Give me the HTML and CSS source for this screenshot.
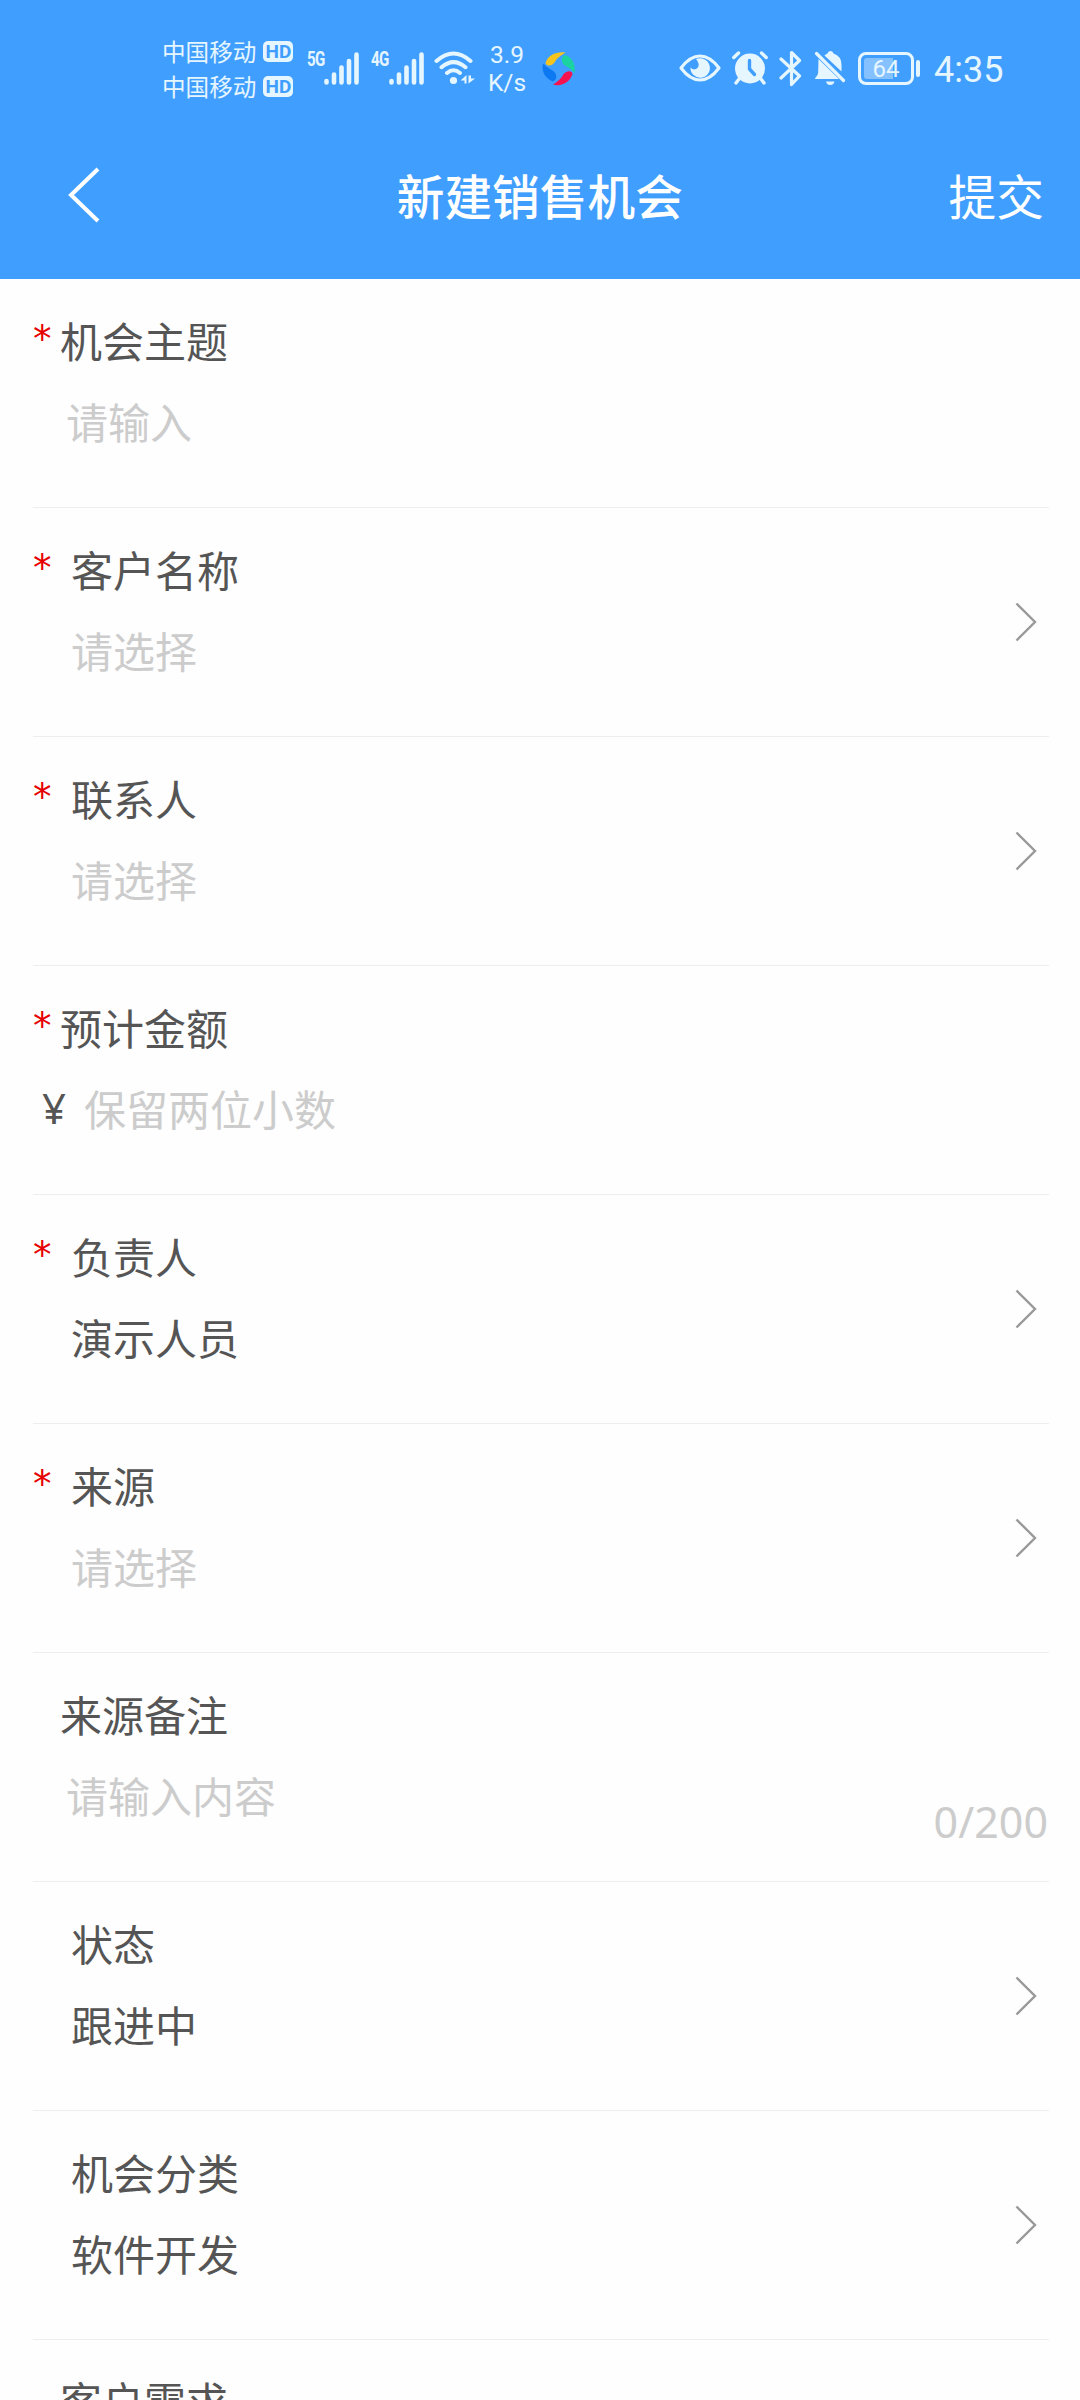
FILE: index.html
```html
<!DOCTYPE html>
<html lang="zh-CN">
<head>
    <meta charset="UTF-8">
    <meta name="viewport" content="width=device-width, initial-scale=1.0">
    <title>新建销售机会</title>
    <link rel="stylesheet" href="styles.css">
</head>
<body>
    <header class="header">
        <div class="status-bar">
            <div class="carriers">
                <div class="carrier">中国移动<span class="hd">HD</span></div>
                <div class="carrier">中国移动<span class="hd">HD</span></div>
            </div>
            <span class="net">5G</span>
            <svg class="signal" width="35" height="33" viewBox="0 0 35 33" stroke="#e6f6ff" stroke-width="4.6" stroke-linecap="round">
                <path d="M2.5 29v1.5M10 22.5v8M17.5 15.5v15M25 9v21.5M32.5 2.5v28"/>
            </svg>
            <span class="net net-4g">4G</span>
            <svg class="signal" width="35" height="33" viewBox="0 0 35 33" stroke="#e6f6ff" stroke-width="4.6" stroke-linecap="round">
                <path d="M2.5 29v1.5M10 22.5v8M17.5 15.5v15M25 9v21.5M32.5 2.5v28"/>
            </svg>
            <svg class="wifi" width="41" height="34" viewBox="0 0 41 34" fill="none" stroke="#e6f6ff" stroke-width="4" stroke-linecap="round">
                <path d="M2.5 10Q19.500 -5 36.500 10M7.500 16.200Q19.500 6 31.500 16.200M13 22Q19.500 16.500 26 22"/>
                <circle cx="19.500" cy="29.500" r="3.600" fill="#e6f6ff" stroke="none"/>
                <path d="M26.500 29.500L32.500 24V32.500H30.500V29.500zM34.500 24.500V32.500L41 27.500H37V24.500z" fill="#e6f6ff" stroke="none"/>
            </svg>
            <div class="speed">
                <div>3.9</div>
                <div>K/s</div>
            </div>
            <svg class="swirl" width="34" height="35" viewBox="0 0 34 35">
                <path d="M3.500 12C6 4 14 .500 23.500 1.500C18 5 15 7 12.500 11.500C10 15.500 4.500 15.500 3.500 12z" fill="#f6c51d"/>
                <path d="M23 4C30 6 34 13 32.500 22C29 18 26.500 16.500 23 14.500C18.500 11.500 19 5.500 23 4z" fill="#1bd3a0"/>
                <path d="M30.500 23C28 31 20 36 11 33.500C16 30.500 18.500 28 21 24C24 19.500 30 19 30.500 23z" fill="#f5124f"/>
                <path d="M11 30.500C4 28 -1 21 1 12.500C4.500 16 7 17.500 10.500 19.500C15.500 22.500 15.500 28.500 11 30.500z" fill="#0c79f2"/>
            </svg>
            <svg class="eye" width="42" height="28" viewBox="0 0 42 28">
                <path d="M2 14Q11 2 21 2T40 14Q31 26 21 26T2 14z" fill="none" stroke="#e6f6ff" stroke-width="3.200" stroke-linejoin="round"/>
                <path d="M19 4.500A9.700 9.700 0 1 1 11.500 13.500Q15 17 18.500 14Q21.500 10 17 5z" fill="#e6f6ff"/>
            </svg>
            <svg class="alarm" width="36" height="34" viewBox="0 0 36 34">
                <circle cx="18" cy="17.500" r="15" fill="#e6f6ff"/>
                <path d="M1.800 6.500L6.500 2M29.500 2L34.200 6.500M7 28L4 32M29 28L32 32" stroke="#e6f6ff" stroke-width="3.400" stroke-linecap="round"/>
                <path d="M17.500 9.500V18L22.500 23.500" fill="none" stroke="#409eff" stroke-width="3.400" stroke-linecap="round" stroke-linejoin="round"/>
            </svg>
            <svg class="bluetooth" width="23" height="37" viewBox="0 0 23 37">
                <path d="M2 9L20.500 26L12.500 34.500V2.500L20.500 10.500L2 28" fill="none" stroke="#e6f6ff" stroke-width="3.200" stroke-linecap="round" stroke-linejoin="round"/>
            </svg>
            <svg class="bell" width="32" height="34" viewBox="0 0 32 34" fill="#e6f6ff">
                <path d="M4.500 8L25 28H1C1 26 4.200 25 4.200 21zM10.500 4.500Q12 3 13.500 2.500Q14 0 16.500 0T19.500 2.500Q27.500 5 27.500 14V20.500z"/>
                <path d="M12 30.500H20.500Q19.500 34 16.200 34T12 30.500z"/>
                <path d="M2.500 2.500L29.500 29.500" stroke="#e6f6ff" stroke-width="3.200" stroke-linecap="round"/>
            </svg>
            <div class="battery">
                <div class="battery-level">64</div>
            </div>
            <div class="battery-cap"></div>
            <span class="clock">4:35</span>
        </div>
        <div class="nav-bar">
            <svg class="back" width="34" height="56" viewBox="0 0 34 56">
                <path d="M32 2L5 28L32 54" fill="none" stroke="#fff" stroke-width="4"/>
            </svg>
            <h1 class="title">新建销售机会</h1>
            <span class="submit">提交</span>
        </div>
    </header>

    <main class="form">
        <div class="field">
            <div class="label"><span class="star">*</span>机会主题</div>
            <div class="value placeholder">请输入</div>
        </div>
        <div class="field select">
            <div class="label"><span class="star">*</span>客户名称</div>
            <div class="value placeholder">请选择</div>
            <svg class="arrow" width="22" height="40" viewBox="0 0 22 40"><path d="M1.500 1.500L20 20L1.500 38.500"/></svg>
        </div>
        <div class="field select">
            <div class="label"><span class="star">*</span>联系人</div>
            <div class="value placeholder">请选择</div>
            <svg class="arrow" width="22" height="40" viewBox="0 0 22 40"><path d="M1.500 1.500L20 20L1.500 38.500"/></svg>
        </div>
        <div class="field money">
            <div class="label"><span class="star">*</span>预计金额</div>
            <div class="value placeholder"><span class="yen">¥</span>保留两位小数</div>
        </div>
        <div class="field select">
            <div class="label"><span class="star">*</span>负责人</div>
            <div class="value">演示人员</div>
            <svg class="arrow" width="22" height="40" viewBox="0 0 22 40"><path d="M1.500 1.500L20 20L1.500 38.500"/></svg>
        </div>
        <div class="field select">
            <div class="label"><span class="star">*</span>来源</div>
            <div class="value placeholder">请选择</div>
            <svg class="arrow" width="22" height="40" viewBox="0 0 22 40"><path d="M1.500 1.500L20 20L1.500 38.500"/></svg>
        </div>
        <div class="field">
            <div class="label"><span class="star"></span>来源备注</div>
            <div class="value placeholder">请输入内容</div>
            <span class="count">0/200</span>
        </div>
        <div class="field select">
            <div class="label"><span class="star"></span>状态</div>
            <div class="value">跟进中</div>
            <svg class="arrow" width="22" height="40" viewBox="0 0 22 40"><path d="M1.500 1.500L20 20L1.500 38.500"/></svg>
        </div>
        <div class="field select">
            <div class="label"><span class="star"></span>机会分类</div>
            <div class="value">软件开发</div>
            <svg class="arrow" width="22" height="40" viewBox="0 0 22 40"><path d="M1.500 1.500L20 20L1.500 38.500"/></svg>
        </div>
        <div class="field last">
            <div class="label"><span class="star"></span>客户需求</div>
        </div>
    </main>
</body>
</html>
```
FILE: styles.css
```css
body {
    font-family: "Noto Sans CJK SC", sans-serif;
    background-color: #fefefe;
    margin: 0;
    height: 2400px;
    color: #555;
    overflow: hidden;
}

svg {
    display: block;
    flex-shrink: 0;
}

.header {
    background-color: #409eff;
    height: 279px;
    color: white;
}

/* status bar */
.status-bar {
    display: flex;
    align-items: center;
    height: 136px;
    padding-left: 162px;
    color: #e6f6ff;
    font-family: Roboto, sans-serif;
}

.carriers {
    width: 145px;
    padding-top: 2px;
}

.carrier {
    display: flex;
    align-items: center;
    height: 35px;
    line-height: 35px;
    font-family: "Noto Sans CJK SC", sans-serif;
    font-size: 23.6px;
}

.hd {
    width: 30px;
    height: 21px;
    margin-left: 7px;
    border-radius: 5px;
    background-color: #e6f6ff;
    color: #409eff;
    font: bold 19px/21px Roboto, sans-serif;
    text-align: center;
}

.net {
    width: 17px;
    height: 33px;
    font: bold 21px/15px Roboto, sans-serif;
    letter-spacing: -1px;
    transform: scaleX(0.72);
    transform-origin: left;
}

.net-4g {
    margin-left: 12px;
    width: 18px;
}

.wifi {
    margin-left: 10px;
}

.speed {
    width: 38px;
    margin-left: 13px;
    font-size: 24.5px;
    line-height: 28px;
    padding-top: 2px;
    text-align: center;
}

.swirl {
    margin-left: 16px;
}

.eye {
    margin-left: 103px;
}

.alarm {
    margin-left: 11px;
}

.bluetooth {
    margin-left: 11px;
}

.bell {
    margin-left: 12px;
}

.battery {
    box-sizing: border-box;
    width: 56px;
    height: 33px;
    margin-left: 12px;
    padding: 3px;
    border: 3px solid #e6f6ff;
    border-radius: 8px;
}

.battery-level {
    height: 21px;
    background: linear-gradient(to right, #85c1ff 29px, transparent 29px);
    border-radius: 3px;
    font-size: 24px;
    line-height: 23px;
    text-align: center;
}

.battery-cap {
    width: 4px;
    height: 17px;
    margin-left: 2px;
    border-radius: 2px;
    background-color: #e6f6ff;
}

.clock {
    margin: 4px 0 0 14px;
    font-size: 36px;
    line-height: 40px;
}

/* title bar */
.nav-bar {
    display: flex;
    align-items: center;
    justify-content: space-between;
    height: 118px;
    padding: 0 36px 0 66px;
}

.back {
    margin-right: 31px;
}

.title {
    margin: 0;
    font-size: 47.7px;
    font-weight: 500;
    line-height: 60px;
}

.submit {
    font-size: 47.7px;
    line-height: 60px;
}

/* form rows */
.field {
    position: relative;
    box-sizing: border-box;
    height: 229px;
    margin: 0 31px 0 33px;
    padding-top: 31px;
    border-bottom: 1px solid #eee;
    font-size: 42px;
}

/* runs off under the fold */
.last {
    height: 61px;
    padding-top: 30px;
    border-bottom: none;
    overflow: hidden;
}

.label {
    display: flex;
    height: 60px;
    line-height: 60px;
}

.star {
    width: 27px;
    color: #e60000;
    font-family: "DejaVu Sans", sans-serif;
    font-size: 37px;
}

.value {
    height: 60px;
    margin-top: 21px;
    padding-left: 33px;
    line-height: 60px;
}

.placeholder {
    color: #ccc;
}

.select .star {
    width: 38px;
}

.select .value {
    padding-left: 38px;
}

.money .value {
    display: flex;
    padding-left: 9px;
}

.yen {
    width: 42px;
    color: #555;
    font-family: "Noto Sans", sans-serif;
}

.arrow {
    position: absolute;
    right: 12px;
    top: 94px;
    fill: none;
    stroke: #999;
    stroke-width: 2.4;
}

.count {
    position: absolute;
    right: 1px;
    top: 139px;
    color: #ccc;
    font-family: "Noto Sans", sans-serif;
    font-size: 43px;
    line-height: 60px;
}
```
